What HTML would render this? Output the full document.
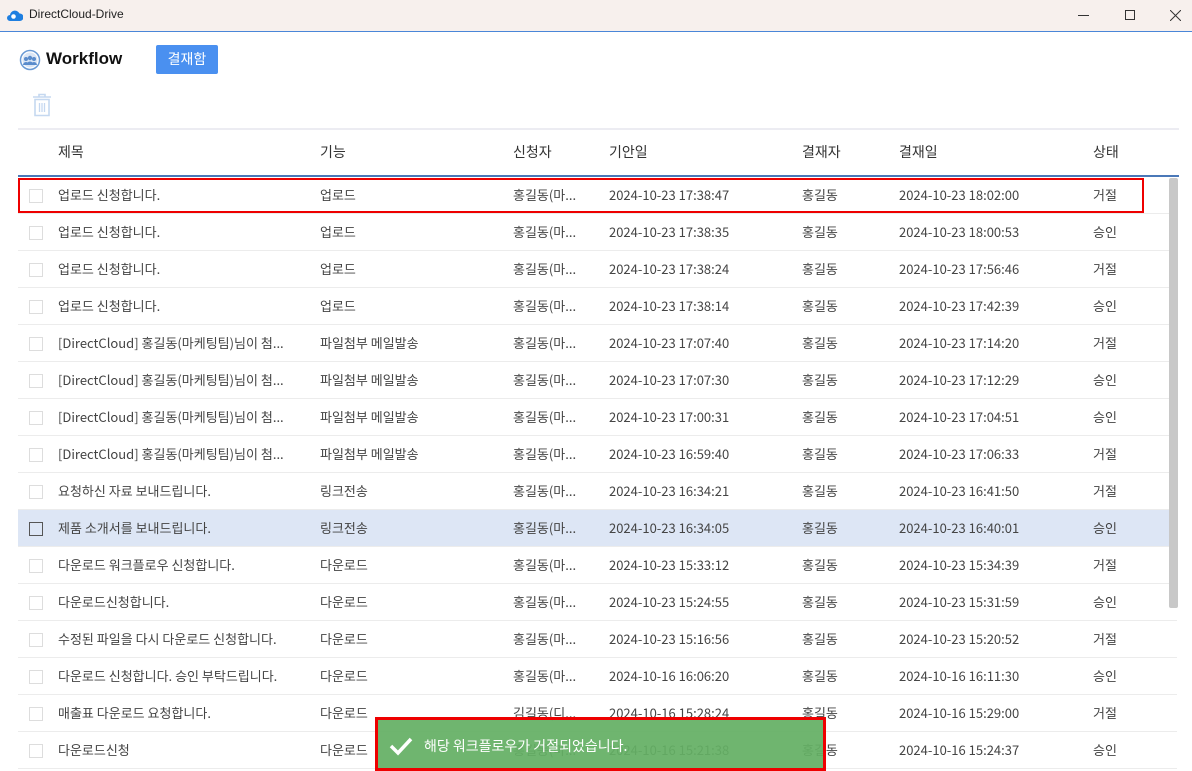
<!DOCTYPE html>
<html><head><meta charset="utf-8"><style>
*{box-sizing:border-box;margin:0;padding:0}
body{width:1192px;height:771px;overflow:hidden;background:#fff;font-family:"Noto Sans CJK KR","Liberation Sans",sans-serif;color:#444;font-size:13px;position:relative}
.tb{position:absolute;left:0;top:0;width:1192px;height:32px;background:#f7f0ed;border-bottom:1px solid #4a86d8}
.tb .t{position:absolute;left:29px;top:7px;font-size:12px;color:#222;font-family:"Liberation Sans",sans-serif}
.a{position:absolute;white-space:nowrap;line-height:18px}
.row{position:absolute;left:18px;width:1159px;height:37px;border-bottom:1px solid #ececec}
.row span{position:absolute;top:9px;line-height:18px;white-space:nowrap}
.cb{position:absolute;left:11px;top:12px;width:14px;height:14px;border:1px solid #ddd;background:#fff}
.hl{background:#dde6f5}
.hl .cb{border:1px solid #555;background:transparent}
</style></head><body>
<div class="tb">
<svg style="position:absolute;left:7px;top:8px" width="16" height="14" viewBox="0 0 16 14"><path d="M3 13a3 3 0 0 1 0-6a5 5 0 0 1 9.5-1.5A3.7 3.7 0 0 1 13 13z" fill="#1f7fe0"/><circle cx="6.5" cy="8.5" r="2.3" fill="#fff"/></svg>
<div class="t">DirectCloud-Drive</div>
<div class="a" style="left:1078px;top:15px;width:11px;height:1px;background:#333"></div>
<div class="a" style="left:1125px;top:10px;width:10px;height:10px;border:1px solid #333"></div>
<svg style="position:absolute;left:1170px;top:10px" width="11" height="11"><path d="M0 0L11 11M11 0L0 11" stroke="#333" stroke-width="1"/></svg>
</div>
<svg style="position:absolute;left:19px;top:49px" width="22" height="22" viewBox="0 0 22 22"><circle cx="11" cy="11" r="9.5" fill="none" stroke="#6a9ad4" stroke-width="1.5"/><circle cx="11" cy="11" r="7.5" fill="#dbe6f5"/><circle cx="7" cy="10" r="2" fill="#5a8ccc"/><circle cx="11" cy="9" r="2.2" fill="#5a8ccc"/><circle cx="15" cy="10" r="2" fill="#5a8ccc"/><path d="M4 16a3 3 0 0 1 6 0zM7.5 16a3.5 3.5 0 0 1 7 0zM12 16a3 3 0 0 1 6 0z" fill="#5a8ccc"/></svg>
<div class="a" style="left:46px;top:49px;font-size:17px;font-weight:bold;color:#111;font-family:'Liberation Sans',sans-serif;line-height:20px">Workflow</div>
<div class="a" style="left:156px;top:45px;width:62px;height:29px;background:#4a90f0;border-radius:2px;color:#fff;font-size:14px;text-align:center;line-height:28px">결재함</div>
<svg style="position:absolute;left:32px;top:93px" width="20" height="24" viewBox="0 0 20 24"><path d="M1 4H19M7 4V1.5H13V4M3 6.5H17V22.5H3z" fill="none" stroke="#c5d8f0" stroke-width="1.6"/><path d="M7.5 10V19M10 10V19M12.5 10V19" stroke="#c5d8f0" stroke-width="1.3"/></svg>
<div class="a" style="left:18px;top:128px;width:1161px;height:2px;background:#ececf2"></div>
<div class="a" style="left:58px;top:143px;font-size:14px;color:#333">제목</div>
<div class="a" style="left:320px;top:143px;font-size:14px;color:#333">기능</div>
<div class="a" style="left:513px;top:143px;font-size:14px;color:#333">신청자</div>
<div class="a" style="left:609px;top:143px;font-size:14px;color:#333">기안일</div>
<div class="a" style="left:802px;top:143px;font-size:14px;color:#333">결재자</div>
<div class="a" style="left:899px;top:143px;font-size:14px;color:#333">결재일</div>
<div class="a" style="left:1093px;top:143px;font-size:14px;color:#333">상태</div>
<div class="a" style="left:18px;top:175px;width:1161px;height:2px;background:#4a78b8"></div>
<div class="row" style="top:177px"><div class="cb"></div><span style="left:40px">업로드 신청합니다.</span><span style="left:302px">업로드</span><span style="left:495px">홍길동(마...</span><span style="left:591px">2024-10-23 17:38:47</span><span style="left:784px">홍길동</span><span style="left:881px">2024-10-23 18:02:00</span><span style="left:1075px">거절</span></div>
<div class="row" style="top:214px"><div class="cb"></div><span style="left:40px">업로드 신청합니다.</span><span style="left:302px">업로드</span><span style="left:495px">홍길동(마...</span><span style="left:591px">2024-10-23 17:38:35</span><span style="left:784px">홍길동</span><span style="left:881px">2024-10-23 18:00:53</span><span style="left:1075px">승인</span></div>
<div class="row" style="top:251px"><div class="cb"></div><span style="left:40px">업로드 신청합니다.</span><span style="left:302px">업로드</span><span style="left:495px">홍길동(마...</span><span style="left:591px">2024-10-23 17:38:24</span><span style="left:784px">홍길동</span><span style="left:881px">2024-10-23 17:56:46</span><span style="left:1075px">거절</span></div>
<div class="row" style="top:288px"><div class="cb"></div><span style="left:40px">업로드 신청합니다.</span><span style="left:302px">업로드</span><span style="left:495px">홍길동(마...</span><span style="left:591px">2024-10-23 17:38:14</span><span style="left:784px">홍길동</span><span style="left:881px">2024-10-23 17:42:39</span><span style="left:1075px">승인</span></div>
<div class="row" style="top:325px"><div class="cb"></div><span style="left:40px">[DirectCloud] 홍길동(마케팅팀)님이 첨...</span><span style="left:302px">파일첨부 메일발송</span><span style="left:495px">홍길동(마...</span><span style="left:591px">2024-10-23 17:07:40</span><span style="left:784px">홍길동</span><span style="left:881px">2024-10-23 17:14:20</span><span style="left:1075px">거절</span></div>
<div class="row" style="top:362px"><div class="cb"></div><span style="left:40px">[DirectCloud] 홍길동(마케팅팀)님이 첨...</span><span style="left:302px">파일첨부 메일발송</span><span style="left:495px">홍길동(마...</span><span style="left:591px">2024-10-23 17:07:30</span><span style="left:784px">홍길동</span><span style="left:881px">2024-10-23 17:12:29</span><span style="left:1075px">승인</span></div>
<div class="row" style="top:399px"><div class="cb"></div><span style="left:40px">[DirectCloud] 홍길동(마케팅팀)님이 첨...</span><span style="left:302px">파일첨부 메일발송</span><span style="left:495px">홍길동(마...</span><span style="left:591px">2024-10-23 17:00:31</span><span style="left:784px">홍길동</span><span style="left:881px">2024-10-23 17:04:51</span><span style="left:1075px">승인</span></div>
<div class="row" style="top:436px"><div class="cb"></div><span style="left:40px">[DirectCloud] 홍길동(마케팅팀)님이 첨...</span><span style="left:302px">파일첨부 메일발송</span><span style="left:495px">홍길동(마...</span><span style="left:591px">2024-10-23 16:59:40</span><span style="left:784px">홍길동</span><span style="left:881px">2024-10-23 17:06:33</span><span style="left:1075px">거절</span></div>
<div class="row" style="top:473px"><div class="cb"></div><span style="left:40px">요청하신 자료 보내드립니다.</span><span style="left:302px">링크전송</span><span style="left:495px">홍길동(마...</span><span style="left:591px">2024-10-23 16:34:21</span><span style="left:784px">홍길동</span><span style="left:881px">2024-10-23 16:41:50</span><span style="left:1075px">거절</span></div>
<div class="row hl" style="top:510px"><div class="cb"></div><span style="left:40px">제품 소개서를 보내드립니다.</span><span style="left:302px">링크전송</span><span style="left:495px">홍길동(마...</span><span style="left:591px">2024-10-23 16:34:05</span><span style="left:784px">홍길동</span><span style="left:881px">2024-10-23 16:40:01</span><span style="left:1075px">승인</span></div>
<div class="row" style="top:547px"><div class="cb"></div><span style="left:40px">다운로드 워크플로우 신청합니다.</span><span style="left:302px">다운로드</span><span style="left:495px">홍길동(마...</span><span style="left:591px">2024-10-23 15:33:12</span><span style="left:784px">홍길동</span><span style="left:881px">2024-10-23 15:34:39</span><span style="left:1075px">거절</span></div>
<div class="row" style="top:584px"><div class="cb"></div><span style="left:40px">다운로드신청합니다.</span><span style="left:302px">다운로드</span><span style="left:495px">홍길동(마...</span><span style="left:591px">2024-10-23 15:24:55</span><span style="left:784px">홍길동</span><span style="left:881px">2024-10-23 15:31:59</span><span style="left:1075px">승인</span></div>
<div class="row" style="top:621px"><div class="cb"></div><span style="left:40px">수정된 파일을 다시 다운로드 신청합니다.</span><span style="left:302px">다운로드</span><span style="left:495px">홍길동(마...</span><span style="left:591px">2024-10-23 15:16:56</span><span style="left:784px">홍길동</span><span style="left:881px">2024-10-23 15:20:52</span><span style="left:1075px">거절</span></div>
<div class="row" style="top:658px"><div class="cb"></div><span style="left:40px">다운로드 신청합니다. 승인 부탁드립니다.</span><span style="left:302px">다운로드</span><span style="left:495px">홍길동(마...</span><span style="left:591px">2024-10-16 16:06:20</span><span style="left:784px">홍길동</span><span style="left:881px">2024-10-16 16:11:30</span><span style="left:1075px">승인</span></div>
<div class="row" style="top:695px"><div class="cb"></div><span style="left:40px">매출표 다운로드 요청합니다.</span><span style="left:302px">다운로드</span><span style="left:495px">김길동(디...</span><span style="left:591px">2024-10-16 15:28:24</span><span style="left:784px">홍길동</span><span style="left:881px">2024-10-16 15:29:00</span><span style="left:1075px">거절</span></div>
<div class="row" style="top:732px"><div class="cb"></div><span style="left:40px">다운로드신청</span><span style="left:302px">다운로드</span><span style="left:495px">홍길동(마...</span><span style="left:591px">2024-10-16 15:21:38</span><span style="left:784px">홍길동</span><span style="left:881px">2024-10-16 15:24:37</span><span style="left:1075px">승인</span></div>
<div class="a" style="left:1169px;top:178px;width:9px;height:430px;background:#c8c8c8;border-radius:2px"></div>
<div class="a" style="left:18px;top:178px;width:1126px;height:35px;border:2px solid #e00"></div>
<div class="a" style="left:375px;top:717px;width:451px;height:54px;border:3px solid #e00;background:rgba(100,175,100,0.93)"></div>
<svg style="position:absolute;left:389px;top:736px" width="24" height="20" viewBox="0 0 24 20"><path d="M2 10L9 17L22 3" fill="none" stroke="#fff" stroke-width="3.5"/></svg>
<div class="a" style="left:424px;top:737px;font-size:14px;color:#fff">해당 워크플로우가 거절되었습니다.</div>
</body></html>
